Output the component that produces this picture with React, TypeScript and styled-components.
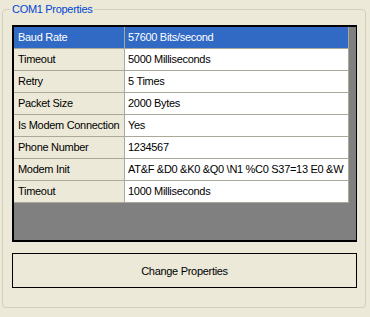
import React from "react";
import styled, { createGlobalStyle } from "styled-components";

const rows = [
  { name: "Baud Rate", value: "57600 Bits/second" },
  { name: "Timeout", value: "5000 Milliseconds" },
  { name: "Retry", value: "5 Times" },
  { name: "Packet Size", value: "2000 Bytes" },
  { name: "Is Modem Connection", value: "Yes" },
  { name: "Phone Number", value: "1234567" },
  { name: "Modem Init", value: "AT&F &D0 &K0 &Q0 \\N1 %C0 S37=13 E0 &W" },
  { name: "Timeout", value: "1000 Milliseconds" },
];

const GlobalStyle = createGlobalStyle`
  html, body {
    margin: 0;
    padding: 0;
    background: #ece9d8;
  }
  body {
    font-family: "Liberation Sans", Arial, sans-serif;
    font-size: 11px;
    letter-spacing: -0.3px;
    color: #000;
  }
`;

const Page = styled.div`
  width: 370px;
  height: 317px;
  padding: 3px 4px 0 2px;
  box-sizing: border-box;
`;

const GroupBox = styled.fieldset`
  margin: 0;
  padding: 9px 8px 19px 9px;
  border: 1px solid #d0d0bf;
  border-radius: 4px;
  min-width: 0;
`;

const Legend = styled.legend`
  padding: 0 2px;
  margin-left: -2px;
  line-height: 13px;
  color: #0046d5;
`;

const Grid = styled.div`
  height: 217px;
  box-sizing: border-box;
  border: 2px solid #000;
  border-right-width: 1px;
  background: #808080;
`;

const Row = styled.div`
  display: grid;
  grid-template-columns: 111px 224px;
`;

const Cell = styled.div<{ $header?: boolean; $selected?: boolean }>`
  height: 22px;
  box-sizing: border-box;
  line-height: 21px;
  padding-left: ${({ $header }) => ($header ? 4 : 3)}px;
  border-right: 1px solid #aca899;
  border-bottom: 1px solid #aca899;
  white-space: nowrap;
  overflow: hidden;
  background: ${({ $header, $selected }) =>
    $selected ? "#316ac5" : $header ? "#ece9d8" : "#fff"};
  color: ${({ $selected }) => ($selected ? "#fff" : "#000")};
`;

const Button = styled.button`
  display: block;
  width: 100%;
  height: 35px;
  margin-top: 11px;
  padding: 0;
  border: 1px solid #000;
  background: #ece9d8;
  font: inherit;
  letter-spacing: inherit;
  color: #000;
`;

export default function App() {
  return (
    <Page>
      <GlobalStyle />
      <GroupBox>
        <Legend>COM1 Properties</Legend>
        <Grid>
          {rows.map((row, i) => (
            <Row key={i}>
              <Cell $header $selected={i === 0}>
                {row.name}
              </Cell>
              <Cell $selected={i === 0}>{row.value}</Cell>
            </Row>
          ))}
        </Grid>
        <Button>Change Properties</Button>
      </GroupBox>
    </Page>
  );
}
